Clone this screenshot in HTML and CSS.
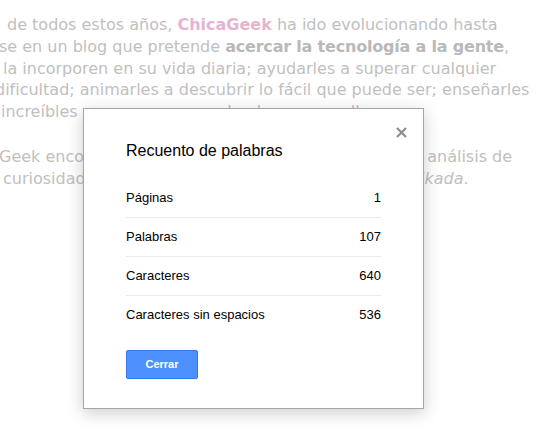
FILE: index.html
```
<!DOCTYPE html>
<html lang="es">
<head>
<meta charset="utf-8">
<title>Recuento de palabras</title>
<link rel="stylesheet" href="styles.css">
</head>
<body>
<div class="doc">
  <div class="para">
    <div class="ln i1">de todos estos años, <b class="pink">ChicaGeek</b> ha ido evolucionando hasta</div>
    <div class="ln i2">se en un blog que pretende <b class="tight">acercar la tecnología a la gente</b>,</div>
    <div class="ln i3">la incorporen en su vida diaria; ayudarles a superar cualquier</div>
    <div class="ln i4">dificultad; animarles a descubrir lo fácil que puede ser; enseñarles</div>
    <div class="ln i5">increíbles cosas que se pueden hacer con ella.</div>
  </div>
  <div class="para">
    <div class="ln i2">Geek encontrarás noticias, tutoriales, trucos, vídeos, análisis de</div>
    <div class="ln i3">curiosidades y de vez en cuando, alguna que otra <i>frikada</i>.</div>
  </div>
</div>

<div class="dialog" role="dialog">
  <button class="close" aria-label="Cerrar">
    <svg width="11" height="11" viewBox="0 0 11 11"><path d="M1 1L10 10M10 1L1 10" stroke="#8e8e8e" stroke-width="2.2" fill="none"/></svg>
  </button>
  <div class="title">Recuento de palabras</div>
  <div class="rows">
    <div class="row"><span>Páginas</span><span>1</span></div>
    <div class="row"><span>Palabras</span><span>107</span></div>
    <div class="row"><span>Caracteres</span><span>640</span></div>
    <div class="row"><span>Caracteres sin espacios</span><span>536</span></div>
  </div>
  <button class="btn">Cerrar</button>
</div>
</body>
</html>
```
FILE: styles.css
```
html, body {
  margin: 0;
  padding: 0;
  background: #fff;
}
body {
  width: 555px;
  height: 440px;
  overflow: hidden;
  position: relative;
}
.doc {
  padding-top: 14px;
  font-family: "DejaVu Sans", Verdana, sans-serif;
  font-size: 16px;
  line-height: 21.8px;
  color: #bfbfbf;
}
.para {
  margin-bottom: 23px;
}
.ln {
  white-space: nowrap;
}
.ln b {
  font-weight: bold;
  color: #b9b9b9;
}
.ln b.pink {
  color: #e6b4d3;
}
.ln b.tight {
  letter-spacing: -0.2px;
}
.i1 { text-indent: 7px; }
.i2 { text-indent: -1px; }
.i3 { text-indent: 3px; }
.i4 { text-indent: -5px; }
.i5 { text-indent: 1px; }

.dialog {
  position: absolute;
  left: 83px;
  top: 108px;
  width: 341px;
  box-sizing: border-box;
  padding: 33px 42px 29px;
  background: #fff;
  border: 1px solid rgba(0, 0, 0, 0.35);
  box-shadow: 0 4px 16px rgba(0, 0, 0, 0.2);
  font-family: "Liberation Sans", Arial, sans-serif;
  color: #000;
}
.close {
  position: absolute;
  top: 18px;
  right: 16px;
  width: 11px;
  height: 11px;
  padding: 0;
  border: 0;
  background: none;
  display: block;
}
.close svg {
  display: block;
}
.title {
  font-size: 16px;
  line-height: 18px;
  margin-bottom: 19px;
}
.rows {
  display: flex;
  flex-direction: column;
}
.row {
  display: flex;
  justify-content: space-between;
  padding: 12px 0;
  font-size: 13px;
  line-height: 14px;
  border-bottom: 1px solid #ebebeb;
}
.row:last-child {
  border-bottom: 0;
}
.btn {
  display: block;
  margin-top: 16px;
  min-width: 72px;
  height: 29px;
  padding: 0 8px;
  box-sizing: border-box;
  background: #4d90fe;
  border: 1px solid #3079ed;
  border-radius: 2px;
  color: #fff;
  font-family: "Liberation Sans", Arial, sans-serif;
  font-size: 11px;
  font-weight: bold;
  line-height: 27px;
  text-align: center;
}
```
